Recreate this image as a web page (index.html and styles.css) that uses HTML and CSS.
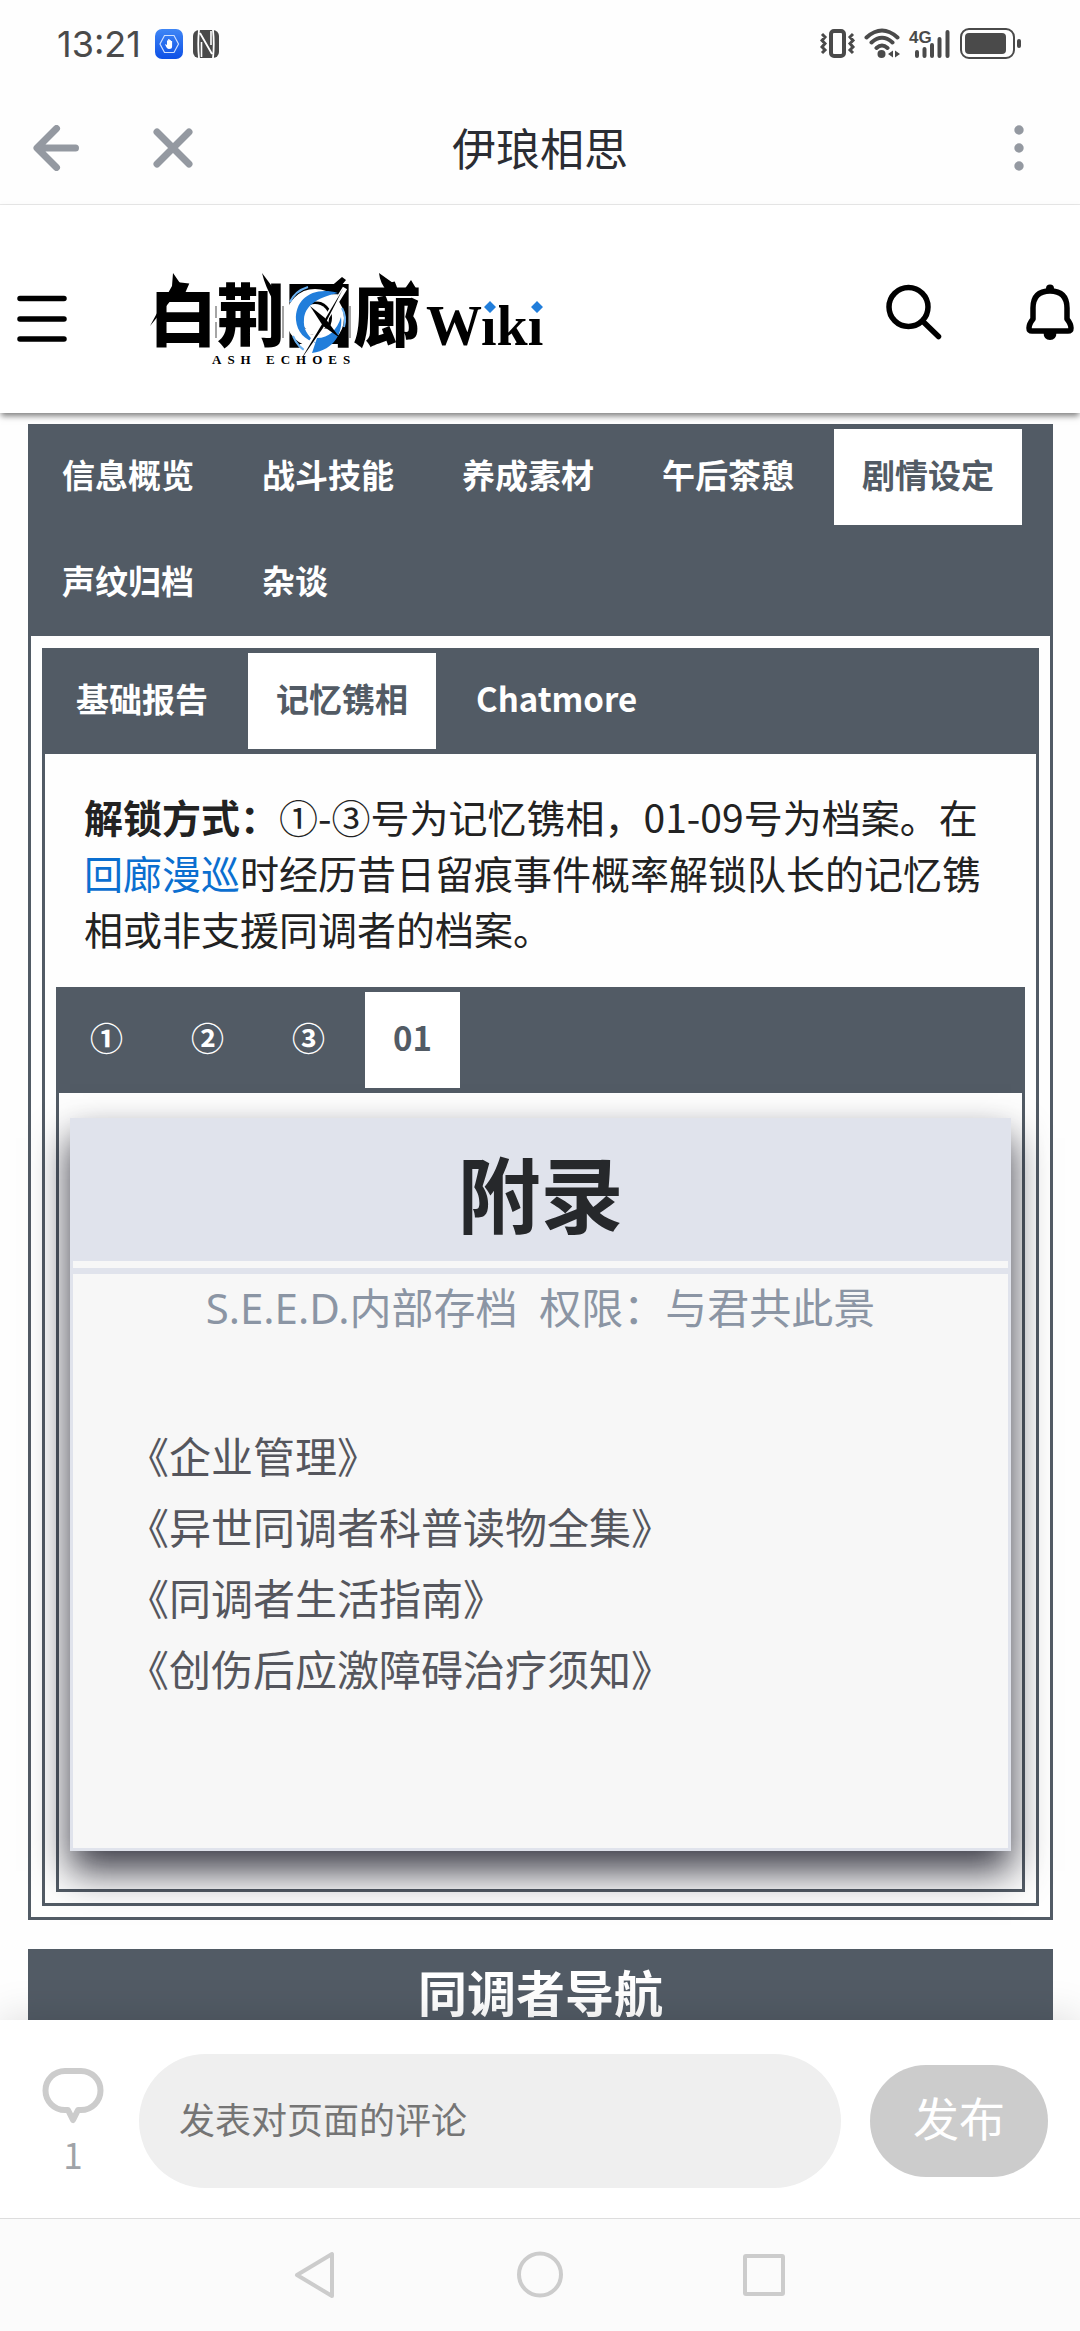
FILE: index.html
```html
<!DOCTYPE html>
<html lang="zh-CN">

<head>
    <meta charset="UTF-8">
    <meta name="viewport" content="width=device-width, initial-scale=1.0">
    <title>伊琅相思</title>
    <link rel="stylesheet" href="styles.css">
</head>

<body>
    <div class="status-bar">
        <span class="time">13:21</span>
        <svg width="28" height="30" viewBox="0 0 28 30">
            <defs>
                <linearGradient id="appBlue" x1="0" y1="0" x2="0" y2="1">
                    <stop offset="0" stop-color="#3f86f5" />
                    <stop offset="1" stop-color="#0d50e6" />
                </linearGradient>
            </defs>
            <rect width="28" height="30" rx="7" fill="url(#appBlue)" />
            <path d="M9.500 6.500h9.500l4.500 8.500-4.500 8.500h-9.500l-4.500-8.500z" fill="none" stroke="#cfe0ff" stroke-width="1.200" />
            <path d="M10 15l2 1v-4.500h1.200V10h1.300v1h1.300v1h1.300v5.500q0 2.500-3 2.500-2.600 0-4.100-5z" fill="#fff" />
        </svg>
        <svg width="26" height="28" viewBox="0 0 26 28">
            <rect width="26" height="28" rx="6" fill="#4a4a4a" />
            <path d="M6 0Q4.500 14 6 28M7 3l12 21M20 0q1.500 14 0 28" fill="none" stroke="#fff" stroke-width="1.800" />
            <path d="M8.500 12v15M18 1v14" stroke="#fff" stroke-width="1.600" />
        </svg>
        <div class="status-icons">
            <svg width="36" height="32" viewBox="0 0 36 32" fill="none" stroke="#4a4a4a">
                <rect x="11" y="3" width="13" height="25" rx="3" stroke-width="4" />
                <path d="M2 6l3 3-3 3.500 3 3-3 3.500 3 3-3 3M33 6l-3 3 3 3.500-3 3 3 3.500-3 3 3 3" stroke-width="3" />
            </svg>
            <svg width="36" height="32" viewBox="0 0 36 32" fill="none" stroke="#4a4a4a" stroke-width="4" stroke-linecap="round">
                <path d="M2.500 9.500Q18-4.500 33.500 9.500M7.500 14.500Q18 5 28.500 14.500M12.500 20Q18 15 23.500 20" />
                <circle cx="17.500" cy="26" r="4" fill="#4a4a4a" stroke="none" />
                <path d="M29 22.500v7l-5-3.500zM31 22.500v7l5-3.500z" fill="#4a4a4a" stroke="none" />
            </svg>
            <svg width="44" height="32" viewBox="0 0 44 32" class="signal">
                <text x="1" y="15" class="signal-label">4G</text>
                <path d="M9 24v4M16.500 21v7M24 17v11M31.500 11v17M39.500 4v24" stroke="#4a4a4a" stroke-width="4" stroke-linecap="round" />
            </svg>
            <svg width="62" height="32" viewBox="0 0 62 32">
                <rect x="1" y="1" width="53" height="29" rx="8" fill="none" stroke="#4a4a4a" stroke-width="2" />
                <rect x="5" y="5" width="41" height="21" rx="4" fill="#4a4a4a" />
                <rect x="57" y="11" width="4" height="9" rx="2" fill="#4a4a4a" />
            </svg>
        </div>
    </div>

    <header class="app-bar">
        <div class="app-actions">
            <button type="button" aria-label="返回">
                <svg width="46" height="46" viewBox="0 0 46 46" class="gray-stroke">
                    <path d="M23.500 3.500L4 23l19.500 19.500M5 23h37.500" />
                </svg>
            </button>
            <button type="button" aria-label="关闭">
                <svg width="40" height="40" viewBox="0 0 40 40" class="gray-stroke">
                    <path d="M4 4l32 32M36 4L4 36" />
                </svg>
            </button>
        </div>
        <h1>伊琅相思</h1>
        <button type="button" class="more" aria-label="更多">
            <svg width="10" height="46" viewBox="0 0 10 46" fill="#9499a1">
                <circle cx="5" cy="5" r="4.700" />
                <circle cx="5" cy="23" r="4.700" />
                <circle cx="5" cy="41" r="4.700" />
            </svg>
        </button>
    </header>

    <header class="site-header">
        <button type="button" aria-label="菜单">
            <svg width="50" height="60" viewBox="0 0 50 60" stroke="#000" stroke-width="5.500" stroke-linecap="round">
                <path d="M3 16.500h44M3 37h44M3 57h44" />
            </svg>
        </button>
        <a href="#" class="logo" aria-label="白荆回廊 Wiki">
            <svg width="396" height="104" viewBox="0 0 396 104">
                <text x="-1" y="81" class="logo-name">白荆回廊</text>
                <path d="M23 13l9 13-10 13L0 66q13-24 22-40zM112 13l12 16v13q-9-16-12-29zM229 13l14 10-5 9q-8-8-9-19zM254 30l7-10 6 10zM192 17l4 3-10 12-8-3z" fill="#000" />
                <path d="M66 46v12M66 62v16M133 46v32M200 46v32" stroke="#888" stroke-width="1.500" />
                <circle cx="165" cy="58" r="23" fill="none" stroke="#fff" stroke-width="12" />
                <circle cx="165" cy="58" r="14" fill="#fff" />
                <path d="M188 33c-25-7-43 6-42 27 1 12 9 20 20 23-9-8-13-14-12-24 1-12 11-21 34-26z" fill="#217edb" />
                <path d="M191 57c2 15-6 33-29 36l5-15c12 0 20-8 24-21z" fill="#217edb" />
                <path d="M140 42q5-11 18-15M192 48q5 9 2 19M143 76q5 12 15 16" fill="none" stroke="#6bb2f2" stroke-width="2" />
                <path d="M195 28l-46 74" stroke="#fff" stroke-width="5" />
                <path d="M193 29l-43 72 23-33z" fill="#000" />
                <path d="M160 46l15 12 15 20-17-12z" fill="#000" />
                <text x="276" y="85" class="logo-wiki">Wiki</text>
                <path d="M333 37h16v18h-16zM381 37h16v18h-16z" fill="#fff" />
                <path d="M340 41l6 6-6 6-6-6zM387 41l6 6-6 6-6-6z" fill="#217edb" />
                <text x="62" y="104" class="logo-sub">ASH ECHOES</text>
            </svg>
        </a>
        <button type="button" class="search" aria-label="搜索">
            <svg width="56" height="56" viewBox="0 0 56 56" fill="none" stroke="#000" stroke-width="5.500" stroke-linecap="round">
                <circle cx="22.500" cy="23" r="19.500" />
                <path d="M37 37.500l15.500 15" />
            </svg>
        </button>
        <button type="button" aria-label="通知">
            <svg width="48" height="56" viewBox="0 0 48 56">
                <circle cx="24" cy="4.500" r="4" />
                <path d="M7 24Q7 7 24 7t17 17v11q4 5 4 9 0 3-3 3H6q-3 0-3-3 0-4 4-9z" fill="none" stroke="#000" stroke-width="5.500" stroke-linejoin="round" />
                <path d="M17.500 48h13q0 8-6.500 8t-6.500-8z" />
            </svg>
        </button>
    </header>

    <main class="content">
        <section class="tabber">
            <nav class="tabs">
                <button type="button">信息概览</button>
                <button type="button">战斗技能</button>
                <button type="button">养成素材</button>
                <button type="button">午后茶憩</button>
                <button type="button" class="active">剧情设定</button>
                <button type="button">声纹归档</button>
                <button type="button">杂谈</button>
            </nav>
            <div class="panel">
                <section class="tabber">
                    <nav class="tabs">
                        <button type="button">基础报告</button>
                        <button type="button" class="active">记忆镌相</button>
                        <button type="button">Chatmore</button>
                    </nav>
                    <div class="panel">
                        <p class="intro"><b>解锁方式：</b>①-③号为记忆镌相，01-09号为档案。在<a href="#">回廊漫巡</a>时经历昔日留痕事件概率解锁队长的记忆镌相或非支援同调者的档案。</p>
                        <section class="tabber">
                            <nav class="tabs">
                                <button type="button">①</button>
                                <button type="button">②</button>
                                <button type="button">③</button>
                                <button type="button" class="active">01</button>
                            </nav>
                            <div class="panel file-panel">
                                <article class="file-card">
                                    <h2>附录</h2>
                                    <p class="file-meta">S.E.E.D.内部存档&nbsp; 权限：与君共此景</p>
                                    <ul class="file-list">
                                        <li>《企业管理》</li>
                                        <li>《异世同调者科普读物全集》</li>
                                        <li>《同调者生活指南》</li>
                                        <li>《创伤后应激障碍治疗须知》</li>
                                    </ul>
                                </article>
                            </div>
                        </section>
                    </div>
                </section>
            </div>
        </section>
        <h2 class="nav-title">同调者导航</h2>
    </main>

    <form class="comment-bar">
        <button type="button" class="comment-count" aria-label="评论">
            <svg width="62" height="56" viewBox="0 0 62 56" fill="none" stroke="#ccc" stroke-width="6" stroke-linejoin="round">
                <path d="M23 3h16a19.500 19.500 0 0 1 0 39h-3l-5 10-5-10h-3a19.500 19.500 0 0 1 0-39z" />
            </svg>
            <span>1</span>
        </button>
        <input type="text" placeholder="发表对页面的评论" aria-label="发表对页面的评论">
        <button type="submit" class="publish">发布</button>
    </form>

    <nav class="system-nav">
        <button type="button" aria-label="后退">
            <svg width="46" height="48" viewBox="0 0 46 48"><path d="M4 24L39 3v42z" /></svg>
        </button>
        <button type="button" aria-label="主页">
            <svg width="46" height="48" viewBox="0 0 46 48"><circle cx="23" cy="23.500" r="21" /></svg>
        </button>
        <button type="button" aria-label="最近任务">
            <svg width="46" height="48" viewBox="0 0 46 48"><rect x="4" y="5" width="38" height="38" rx="1" /></svg>
        </button>
    </nav>
</body>

</html>
```
FILE: styles.css
```css
* {
    box-sizing: border-box;
}

body {
    display: flex;
    flex-direction: column;
    height: 100vh;
    margin: 0;
    overflow: hidden;
    background: #fefefe;
    color: #222;
    font-family: "Noto Sans CJK SC", sans-serif;
}

button {
    padding: 0;
    border: none;
    background: none;
    color: inherit;
    font: inherit;
    cursor: pointer;
}

svg {
    display: block;
}

/* Phone status bar */
.status-bar {
    display: flex;
    flex: none;
    align-items: center;
    gap: 10px;
    height: 92px;
    padding: 0 58px 4px 57px;
    color: #4a4a4a;
}

.time {
    margin-right: 4px;
    font-family: Inter, sans-serif;
    font-size: 36px;
    line-height: 40px;
}

.status-icons {
    display: flex;
    gap: 8px;
    margin-left: auto;
}

.signal {
    overflow: visible;
}

.signal-label {
    fill: #4a4a4a;
    font-family: "Liberation Sans", sans-serif;
    font-size: 17px;
    font-weight: bold;
}

/* App title bar */
.app-bar {
    display: grid;
    grid-template-columns: 1fr auto 1fr;
    flex: none;
    align-items: center;
    height: 113px;
    padding: 0 56px 0 33px;
    border-bottom: 1px solid #e9e9e9;
}

.app-bar h1 {
    margin: 0;
    padding: 0 0 3px 23px;
    color: #2b2d33;
    font-size: 44px;
    font-weight: normal;
    line-height: 64px;
}

.app-actions {
    display: flex;
    align-items: center;
    gap: 74px;
}

.gray-stroke {
    fill: none;
    stroke: #9499a1;
    stroke-width: 7;
    stroke-linecap: round;
    stroke-linejoin: round;
}

.more {
    justify-self: end;
}

/* Wiki header */
.site-header {
    position: relative;
    z-index: 2;
    display: flex;
    flex: none;
    align-items: center;
    height: 208px;
    padding: 6px 6px 0 17px;
    background: #fff;
    box-shadow: 0 4px 6px -1px rgba(0, 0, 0, 0.5);
}

.logo {
    margin-left: 83px;
    color: #000;
}

.logo svg {
    overflow: visible;
}

.logo-name {
    font-family: "Noto Sans CJK SC", sans-serif;
    font-size: 68px;
    font-weight: 900;
}

.logo-wiki {
    font-family: "Liberation Serif", serif;
    font-size: 56px;
    font-weight: bold;
}

.logo-sub {
    font-family: "Liberation Serif", serif;
    font-size: 13px;
    font-weight: bold;
    letter-spacing: 6px;
}

.search {
    margin-right: 84px;
    margin-left: auto;
}

/* Page content */
.content {
    flex: 1;
    min-height: 0;
    padding: 11px 27px 0 28px;
    overflow: hidden;
}

.tabber {
    border: 3px solid #525b65;
    border-top: none;
}

.tabs {
    display: flex;
    flex-wrap: wrap;
    margin: 0 -3px;
    background: #525b65;
    color: #fff;
    font-size: 33px;
    font-weight: bold;
}

.tabs button {
    height: 96px;
    margin: 5px 6px;
    padding: 0 28px 6px;
    line-height: 48px;
}

.tabs .active {
    background: #fff;
    color: #525b65;
}

.panel {
    padding: 12px 11px 11px;
}

.intro {
    margin: 0;
    padding: 22px 28px 31px;
    font-size: 39px;
    line-height: 56px;
}

.intro a {
    color: #0b6fd0;
    text-decoration: none;
}

.file-panel {
    padding: 25px 11px 38px;
}

.file-card {
    min-height: 733px;
    border: 3px solid #e0e3ec;
    background: #f7f7f7;
    box-shadow: 0 20px 36px rgba(10, 10, 24, 0.8);
}

.file-card h2 {
    margin: 0;
    padding: 20px 0;
    background: #e0e3ec;
    color: #26282b;
    font-size: 83px;
    line-height: 100px;
    text-align: center;
}

.file-meta {
    margin: 7px 0 0;
    padding-top: 4px;
    border-top: 6px solid #e0e3ec;
    color: #8b95a4;
    font-family: "Noto Sans", "Noto Sans CJK SC", sans-serif;
    font-size: 42px;
    line-height: 60px;
    text-align: center;
}

.file-list {
    margin: 81px 0 0;
    padding: 0 54px;
    color: #55565d;
    font-size: 42px;
    line-height: 71px;
    list-style: none;
}

.nav-title {
    margin: 29px 0 0;
    padding: 7px 0;
    background: #525b65;
    color: #fff;
    font-size: 49px;
    line-height: 70px;
    text-align: center;
}

/* Comment box */
.comment-bar {
    position: relative;
    z-index: 1;
    display: flex;
    flex: none;
    align-items: center;
    height: 198px;
    padding: 3px 32px 0 42px;
    background: #fff;
    box-shadow: 0 0 40px rgba(0, 0, 0, 0.15);
}

.comment-count {
    color: #a0a3a8;
    font-size: 35px;
    line-height: 40px;
}

.comment-count span {
    display: block;
    margin-top: 10px;
}

.comment-bar input {
    flex: 1;
    min-width: 0;
    height: 134px;
    margin: 0 29px 0 35px;
    padding: 0 40px 6px;
    border: none;
    border-radius: 67px;
    background: #efefef;
    font-family: inherit;
    font-size: 36px;
}

.comment-bar input::placeholder {
    color: #757575;
}

.publish {
    width: 178px;
    height: 112px;
    padding-bottom: 10px;
    border-radius: 56px;
    background: #ccc;
    color: #fff;
    font-size: 46px;
    line-height: 60px;
}

/* Phone navigation keys */
.system-nav {
    position: relative;
    z-index: 1;
    display: flex;
    flex: none;
    justify-content: center;
    gap: 178px;
    height: 113px;
    padding-bottom: 1px;
    border-top: 1px solid #ddd;
    background: #fbfbfb;
}

.system-nav svg {
    fill: none;
    stroke: #ccc;
    stroke-width: 4;
    stroke-linejoin: round;
}
```
